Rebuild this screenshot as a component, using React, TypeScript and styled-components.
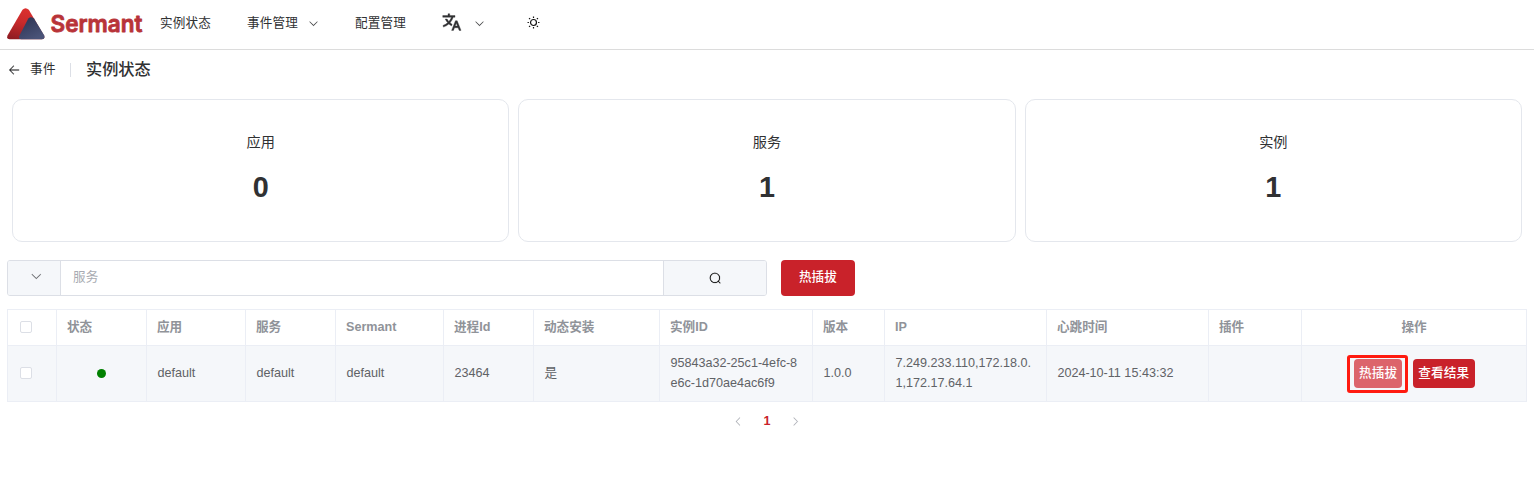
import React from "react";
import styled, { createGlobalStyle } from "styled-components";

const GlobalStyle = createGlobalStyle`
  *, *::before, *::after { box-sizing: border-box; }
  body {
    margin: 0;
    background: #fff;
    color: #303133;
    font-family: "Liberation Sans", "Noto Sans CJK SC", sans-serif;
    font-size: 12.6px;
    overflow: hidden;
  }
`;

const RED = "#c9222a";
const LINE = "#ebeef5";
const BORDER = "#dcdfe6";

const Header = styled.header`
  display: flex;
  align-items: center;
  height: 50px;
  padding: 0 7px 4px;
  border-bottom: 1px solid #dcdcdc;
`;

const Brand = styled.div`
  display: flex;
  align-items: center;
  width: 153px;
  padding-top: 3px;
`;

const BrandMark = styled.svg`
  display: block;
  width: 38px;
  height: 32px;
`;

const BrandName = styled.svg`
  display: block;
  width: 94px;
  height: 32px;
  margin-left: 5px;
  overflow: visible;
`;

const NavItem = styled.div<{ $gap?: number }>`
  display: flex;
  align-items: center;
  height: 20px;
  line-height: 20px;
  white-space: nowrap;
  margin-right: ${(p) => p.$gap ?? 36}px;
`;

const NavLabel = styled.span<{ $gap?: number }>`
  display: flex;
  letter-spacing: 0.15px;
  margin-right: ${(p) => p.$gap ?? 0}px;
`;

const Icon = styled.svg<{ $size: number; $color?: string; $drop?: number }>`
  display: block;
  flex: none;
  width: ${(p) => p.$size}px;
  height: ${(p) => p.$size}px;
  margin-top: ${(p) => p.$drop ?? 0}px;
  color: ${(p) => p.$color ?? "#303133"};
  fill: currentColor;
`;

const PageHeader = styled.div`
  display: flex;
  align-items: center;
  height: 22px;
  margin-top: 8px;
  padding-left: 7px;
`;

const BackLabel = styled.span`
  margin-left: 9px;
  line-height: 20px;
  letter-spacing: 0.4px;
`;

const Divider = styled.span`
  width: 1px;
  height: 14px;
  margin: 2px 15px 0 14px;
  background: ${BORDER};
`;

const PageTitle = styled.h1`
  margin: 0;
  font-size: 16.2px;
  font-weight: 500;
  line-height: 22px;
`;

const Cards = styled.div`
  display: grid;
  grid-template-columns: repeat(3, 1fr);
  gap: 9px;
  margin: 19px 12px 0;
`;

const Card = styled.section`
  display: flex;
  flex-direction: column;
  align-items: center;
  height: 143px;
  padding-top: 31px;
  border: 1px solid #e4e7ed;
  border-radius: 10px;
`;

const CardLabel = styled.div`
  font-size: 14.2px;
  line-height: 22px;
`;

const CardValue = styled.div`
  margin-top: 17px;
  font-size: 28.8px;
  font-weight: 700;
  line-height: 34px;
`;

const Toolbar = styled.div`
  display: flex;
  height: 36px;
  margin: 18px 7px 0;
`;

const SearchGroup = styled.div`
  display: flex;
  width: 760px;
  border: 1px solid ${BORDER};
  border-radius: 3px;
  overflow: hidden;
`;

const Addon = styled.div<{ $width: number; $shift?: number; $lift?: number }>`
  display: flex;
  align-items: center;
  justify-content: center;
  width: ${(p) => p.$width}px;
  padding-left: ${(p) => p.$shift ?? 0}px;
  padding-bottom: ${(p) => p.$lift ?? 0}px;
  background: #f5f7fa;
`;

const Field = styled.div`
  flex: 1;
  padding-left: 12px;
  border: solid ${BORDER};
  border-width: 0 1px;
  color: #a8abb2;
  line-height: 33px;
  letter-spacing: 0.2px;
`;

const Button = styled.button<{ $width: number; $height: number; $faded?: boolean }>`
  display: flex;
  flex: none;
  align-items: center;
  justify-content: center;
  width: ${(p) => p.$width}px;
  height: ${(p) => p.$height}px;
  padding: 0 0 1px;
  border: 0;
  border-radius: 4px;
  background: ${(p) => (p.$faded ? "#dc646b" : RED)};
  color: #fff;
  font: 500 12.6px/1 "Liberation Sans", "Noto Sans CJK SC", sans-serif;
  letter-spacing: 0.15px;
  white-space: nowrap;
`;

const ToolbarAction = styled.div`
  margin-left: 14px;
`;

const Table = styled.table`
  width: 1520px;
  margin: 13px 0 0 7px;
  border-collapse: collapse;
  table-layout: fixed;
`;

const HeadCell = styled.th<{ $center?: boolean }>`
  height: 36px;
  padding: 0 10px 2px;
  border: 1px solid ${LINE};
  color: #909399;
  font-weight: 700;
  line-height: 20px;
  text-align: ${(p) => (p.$center ? "center" : "left")};
  white-space: nowrap;
`;

const Cell = styled.td`
  height: 56px;
  padding: 0 10px 2px 10.4px;
  border: 1px solid ${LINE};
  background: #f5f7fa;
  color: #606266;
  line-height: 20px;
  word-break: break-all;
`;

const Checkbox = styled.span`
  display: block;
  width: 12px;
  height: 12px;
  margin: 1px 0 0 2px;
  border: 1px solid ${BORDER};
  border-radius: 2px;
  background: #fff;
`;

const StatusDot = styled.span`
  display: block;
  width: 9px;
  height: 9px;
  margin: 2px auto 0;
  border-radius: 50%;
  background: #008000;
`;

const Actions = styled.div`
  display: flex;
  align-items: center;
  justify-content: center;
  gap: 5px;
  padding: 2px 7px 0 0;
`;

const Highlight = styled.div`
  display: flex;
  align-items: center;
  justify-content: center;
  width: 61px;
  height: 38px;
  margin-top: 1px;
  padding: 0 0 1px 2px;
  border: 3px solid #ff1a0f;
  border-radius: 3px;
`;

const Pagination = styled.nav`
  display: flex;
  align-items: center;
  justify-content: center;
  height: 38px;
  gap: 19px;
`;

const PageNumber = styled.span`
  color: ${RED};
  font-weight: 700;
  line-height: 20px;
`;

const DOWN =
  "M831.872 340.864 512 652.672 192.128 340.864a30.592 30.592 0 0 0-42.752 0 29.12 29.12 0 0 0 0 41.6L489.664 714.24a32 32 0 0 0 44.672 0l340.288-331.712a29.12 29.12 0 0 0 0-41.728 30.592 30.592 0 0 0-42.752 0z";
const LEFT =
  "M609.408 149.376 277.76 489.6a32 32 0 0 0 0 44.672l331.648 340.352a29.12 29.12 0 0 0 41.728 0 30.592 30.592 0 0 0 0-42.752L339.264 511.936l311.872-319.872a30.592 30.592 0 0 0 0-42.688 29.12 29.12 0 0 0-41.728 0z";
const RIGHT =
  "M340.864 149.312a30.592 30.592 0 0 0 0 42.752L652.736 512 340.864 831.872a30.592 30.592 0 0 0 0 42.752 29.12 29.12 0 0 0 41.728 0L714.24 534.336a32 32 0 0 0 0-44.672L382.592 149.376a29.12 29.12 0 0 0-41.728 0z";
const SEARCH =
  "m795.904 750.72 124.992 124.928a32 32 0 0 1-45.248 45.248L750.656 795.904a416 416 0 1 1 45.248-45.248zM480 832a352 352 0 1 0 0-704 352 352 0 0 0 0 704";
const BACK =
  "M224 480h640a32 32 0 1 1 0 64H224a32 32 0 0 1 0-64M237.248 512l265.408 265.344a32 32 0 0 1-45.312 45.312l-288-288a32 32 0 0 1 0-45.312l288-288a32 32 0 1 1 45.312 45.312z";
const TRANSLATE =
  "m18.5 10l4.4 11h-2.155l-1.201-3h-4.09l-1.199 3h-2.154L16.5 10h2zM10 2v2h6v2h-1.968a18.222 18.222 0 0 1-3.62 6.301a14.864 14.864 0 0 0 2.336 1.707l-.751 1.878A17.015 17.015 0 0 1 9 13.725a16.676 16.676 0 0 1-6.201 3.548l-.536-1.929a14.7 14.7 0 0 0 5.327-3.042A18.078 18.078 0 0 1 4.767 8h2.24A16.032 16.032 0 0 0 9 10.877a16.165 16.165 0 0 0 2.91-4.876L2 6V4h6V2h2zm7.5 10.885L16.253 16h2.492L17.5 12.885z";

type GlyphProps = { d: string; size: number; color?: string; drop?: number };

function Glyph({ d, size, color, drop }: GlyphProps) {
  return (
    <Icon viewBox="0 0 1024 1024" $size={size} $color={color} $drop={drop}>
      <path d={d} stroke="currentColor" strokeWidth="12" />
    </Icon>
  );
}

function Logo() {
  return (
    <Brand>
      <BrandMark viewBox="0 0 38 32">
        <defs>
          <linearGradient id="peak" x1="0.5" y1="0" x2="0.2" y2="1">
            <stop offset="0" stopColor="#dc302f" />
            <stop offset="0.45" stopColor="#c92a2b" />
            <stop offset="1" stopColor="#8f1c22" />
          </linearGradient>
          <linearGradient id="slope" x1="0" y1="0" x2="0.6" y2="1">
            <stop offset="0" stopColor="#2b3150" />
            <stop offset="1" stopColor="#4a5378" />
          </linearGradient>
        </defs>
        <path d="M15.500 1.800Q18.500 -1.300 21.800 1.800L37 27.500Q38.300 31.200 35 31.200H2.500Q-.8 31 .5 27.500Z" fill="url(#peak)" />
        <path d="M21.300 10.500Q24 7.800 27 10.500L37.300 27.500Q38.300 31.200 35 31.200H14Q11.200 31 12.500 27.500Z" fill="url(#slope)" />
      </BrandMark>
      <BrandName viewBox="0 0 94 32">
        <text
          x="0.5"
          y="24"
          textLength="92"
          lengthAdjust="spacingAndGlyphs"
          fontFamily="Inter, sans-serif"
          fontWeight="600"
          fontSize="23"
          fill="#b83338"
          stroke="#b83338"
          strokeWidth="0.8"
          strokeLinejoin="round"
        >
          Sermant
        </text>
      </BrandName>
    </Brand>
  );
}

const columns: { label: string; width: number }[] = [
  { label: "状态", width: 90 },
  { label: "应用", width: 99 },
  { label: "服务", width: 90 },
  { label: "Sermant", width: 108 },
  { label: "进程Id", width: 90 },
  { label: "动态安装", width: 126 },
  { label: "实例ID", width: 153 },
  { label: "版本", width: 72 },
  { label: "IP", width: 162 },
  { label: "心跳时间", width: 162 },
  { label: "插件", width: 93 },
];

const row = [
  "default",
  "default",
  "default",
  "23464",
  "是",
  "95843a32-25c1-4efc-8e6c-1d70ae4ac6f9",
  "1.0.0",
  "7.249.233.110,172.18.0.1,172.17.64.1",
  "2024-10-11 15:43:32",
  "",
];

const stats = [
  { label: "应用", value: 0 },
  { label: "服务", value: 1 },
  { label: "实例", value: 1 },
];

export default function App() {
  return (
    <>
      <GlobalStyle />
      <Header>
        <Logo />
        <NavItem>
          <NavLabel>实例状态</NavLabel>
        </NavItem>
        <NavItem>
          <NavLabel $gap={10}>事件管理</NavLabel>
          <Glyph d={DOWN} size={11} drop={1} />
        </NavItem>
        <NavItem $gap={35}>
          <NavLabel>配置管理</NavLabel>
        </NavItem>
        <NavItem $gap={42}>
          <NavLabel $gap={12}>
            <Icon viewBox="0 0 24 24" $size={21}>
              <path d={TRANSLATE} stroke="currentColor" strokeWidth="0.4" />
            </Icon>
          </NavLabel>
          <Glyph d={DOWN} size={11} drop={1} />
        </NavItem>
        <Icon viewBox="0 0 24 24" $size={13} $color="#111">
          <circle cx="12" cy="12" r="5.500" fill="none" stroke="currentColor" strokeWidth="2.200" />
          <path
            d="M12 1v2.500M12 20.500v2.500M1 12h2.500M20.500 12h2.500M3.800 3.800l2 2M18.200 18.200l2 2M3.800 20.200l2-2M18.200 5.800l2-2"
            stroke="currentColor"
            strokeWidth="2.200"
          />
        </Icon>
      </Header>

      <PageHeader>
        <Glyph d={BACK} size={14} drop={2} />
        <BackLabel>事件</BackLabel>
        <Divider />
        <PageTitle>实例状态</PageTitle>
      </PageHeader>

      <Cards>
        {stats.map((s) => (
          <Card key={s.label}>
            <CardLabel>{s.label}</CardLabel>
            <CardValue>{s.value}</CardValue>
          </Card>
        ))}
      </Cards>

      <Toolbar>
        <SearchGroup>
          <Addon $width={52} $shift={4} $lift={3}>
            <Glyph d={DOWN} size={12.6} color="#606266" />
          </Addon>
          <Field>服务</Field>
          <Addon $width={102}>
            <Glyph d={SEARCH} size={12.6} color="#000" />
          </Addon>
        </SearchGroup>
        <ToolbarAction>
          <Button $width={74} $height={36}>热插拔</Button>
        </ToolbarAction>
      </Toolbar>

      <Table>
        <colgroup>
          <col width={49} />
          {columns.map((c) => (
            <col key={c.label} width={c.width} />
          ))}
          <col />
        </colgroup>
        <thead>
          <tr>
            <HeadCell>
              <Checkbox />
            </HeadCell>
            {columns.map((c) => (
              <HeadCell key={c.label}>{c.label}</HeadCell>
            ))}
            <HeadCell $center>操作</HeadCell>
          </tr>
        </thead>
        <tbody>
          <tr>
            <Cell>
              <Checkbox />
            </Cell>
            <Cell>
              <StatusDot />
            </Cell>
            {row.map((v, i) => (
              <Cell key={i}>{v}</Cell>
            ))}
            <Cell>
              <Actions>
                <Highlight>
                  <Button $width={48} $height={29} $faded>热插拔</Button>
                </Highlight>
                <Button $width={62} $height={29}>查看结果</Button>
              </Actions>
            </Cell>
          </tr>
        </tbody>
      </Table>

      <Pagination>
        <Glyph d={LEFT} size={11} color="#a8abb2" />
        <PageNumber>1</PageNumber>
        <Glyph d={RIGHT} size={11} color="#a8abb2" />
      </Pagination>
    </>
  );
}
